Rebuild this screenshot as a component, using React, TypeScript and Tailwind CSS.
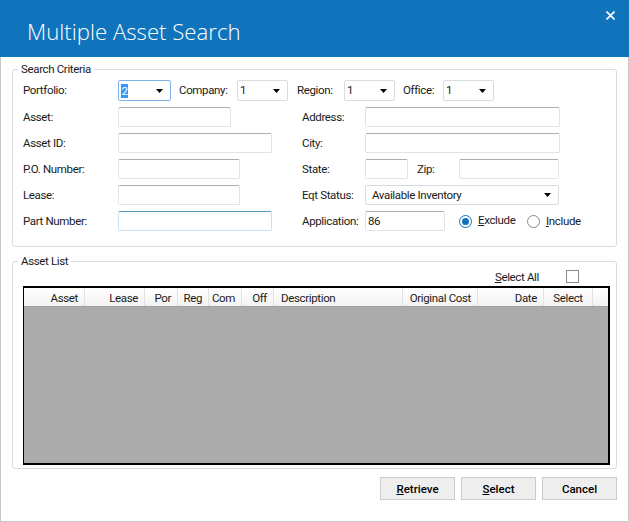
import { ReactNode } from "react";

const field = "h-5 rounded-[2px] border border-[#e2e3ea] border-t-[#abadb3] bg-white";
const button = "h-[23px] w-[75px] border border-[#cccccc] bg-[#eeeeee] pt-[2px] font-medium tracking-normal text-black";

function Label({ children, className = "" }: { children: ReactNode; className?: string }) {
  return <span className={`shrink-0 whitespace-nowrap ${className}`}>{children}</span>;
}

function Arrow() {
  return (
    <svg className="h-[4px] w-[7px] shrink-0 fill-black" viewBox="0 0 7 4">
      <path d="M0 0h7L3.5 4z" />
    </svg>
  );
}

function Combo({ value, className = "" }: { value: ReactNode; className?: string }) {
  return (
    <div className={`flex h-[21px] items-center justify-between rounded-[2px] border bg-white pl-[2px] pr-[7px] ${className}`}>
      <span>{value}</span>
      <Arrow />
    </div>
  );
}

function Radio({ checked }: { checked?: boolean }) {
  return (
    <span className={`flex h-[13px] w-[13px] shrink-0 items-center justify-center rounded-full border ${checked ? "border-[#0f74bc]" : "border-[#8a8a8a]"} bg-white`}>
      {checked && <span className="h-[7px] w-[7px] rounded-full bg-[#0f74bc]" />}
    </span>
  );
}

function Row({ label, left, rightLabel, children }: { label: string; left: ReactNode; rightLabel: string; children: ReactNode }) {
  return (
    <div className="flex h-5 items-center">
      <Label className="w-[95px] pt-[2px]">{label}</Label>
      <div className="w-[184px]">{left}</div>
      <Label className="w-[63px] pt-[2px]">{rightLabel}</Label>
      {children}
    </div>
  );
}

const columns = [
  { name: "Asset", width: "w-[61px]", align: "pr-[6px] text-right" },
  { name: "Lease", width: "w-[60px]", align: "pr-[6px] text-right" },
  { name: "Por", width: "w-[33px]", align: "pr-[6px] text-right" },
  { name: "Reg", width: "w-[31px]", align: "pr-[6px] text-right" },
  { name: "Com", width: "w-[33px]", align: "pr-[6px] text-right" },
  { name: "Off", width: "w-[32px]", align: "pr-[6px] text-right" },
  { name: "Description", width: "w-[129px]", align: "pl-[7px] text-left" },
  { name: "Original Cost", width: "w-[75px]", align: "pr-[6px] text-right" },
  { name: "Date", width: "w-[66px]", align: "pr-[6px] text-right" },
  { name: "Select", width: "w-[49px]", align: "text-center" },
];

export default function App() {
  return (
    <div className="flex h-[522px] w-[629px] flex-col border-x border-b border-[#c8c8c8] bg-white font-['Roboto',sans-serif] text-[11.5px] leading-none tracking-[-0.35px] text-[#1a1a1a]">
      <header className="-mx-px flex h-[57px] shrink-0 items-start justify-between bg-[#0f74bc] pl-[27px] pr-[14px]">
        <h1 className="mt-[17px] font-['Open_Sans',sans-serif] text-[22.2px] font-light leading-[30px] tracking-normal text-white">Multiple Asset Search</h1>
        <svg className="mt-[11px] h-[9px] w-[9px] stroke-white stroke-[1.6]" viewBox="0 0 9 9">
          <path d="M0.5 0.5l8 8M8.5 0.5l-8 8" />
        </svg>
      </header>

      <div className="flex flex-1 flex-col px-[11px] pt-[5px]">
        <fieldset className="h-[185px] rounded-[3px] border border-[#d5dfe5] pl-[10px]">
          <legend className="ml-[-5px] h-[14px] px-[3px] leading-[14px]">Search Criteria</legend>

          <div className="mt-[4px] flex h-[21px] items-center">
            <Label className="w-[95px]">Portfolio:</Label>
            <Combo
              value={<span className="block h-[14px] w-[7px] bg-[#3399ff] text-center leading-[14px] text-white">2</span>}
              className="w-[53px] border-[#7eb4ea]"
            />
            <Label className="ml-[8px] w-[58px]">Company:</Label>
            <Combo value="1" className="w-[51px] border-[#d9dce2]" />
            <Label className="ml-[9px] w-[47px]">Region:</Label>
            <Combo value="1" className="w-[51px] border-[#d9dce2]" />
            <Label className="ml-[8px] w-[40px]">Office:</Label>
            <Combo value="1" className="w-[51px] border-[#d9dce2]" />
          </div>

          <div className="mt-[6px] flex flex-col gap-[6px]">
            <Row label="Asset:" left={<div className={`${field} w-[113px]`} />} rightLabel="Address:">
              <div className={`${field} w-[195px]`} />
            </Row>
            <Row label="Asset ID:" left={<div className={`${field} w-[154px]`} />} rightLabel="City:">
              <div className={`${field} w-[195px]`} />
            </Row>
            <Row label="P.O. Number:" left={<div className={`${field} w-[122px]`} />} rightLabel="State:">
              <div className={`${field} w-[43px]`} />
              <Label className="ml-[9px] w-[42px] pt-[2px]">Zip:</Label>
              <div className={`${field} w-[100px]`} />
            </Row>
            <Row
              label="Lease:"
              left={<div className={`${field} w-[122px]`} />}
              rightLabel="Eqt Status:"
            >
              <div className="flex h-5 w-[194px] items-center justify-between rounded-[2px] border border-[#d9dce2] pl-[6px] pr-[7px]">
                <span className="pt-[2px]">Available Inventory</span>
                <Arrow />
              </div>
            </Row>
            <Row
              label="Part Number:"
              left={<div className="h-5 w-[154px] rounded-[2px] border border-[#c7e2f1] border-t-[#5794bf] bg-white" />}
              rightLabel="Application:"
            >
              <div className={`${field} flex w-[80px] items-center pl-[2px] pt-[2px]`}>86</div>
              <div className="ml-[14px] flex w-[68px] items-center gap-[6px]">
                <Radio checked />
                <span><span className="underline">E</span>xclude</span>
              </div>
              <div className="flex items-center gap-[6px]">
                <Radio />
                <span className="pt-[2px]"><span className="underline">I</span>nclude</span>
              </div>
            </Row>
          </div>
        </fieldset>

        <fieldset className="mt-[7px] flex h-[215px] flex-col rounded-[3px] border border-[#d5dfe5] pl-[10px] pr-[5px]">
          <legend className="ml-[-5px] h-[14px] px-[3px] leading-[14px]">Asset List</legend>

          <div className="flex h-[16px] items-center justify-end pr-[32px]">
            <span className="mr-[27px] pt-[4px]"><span className="underline">S</span>elect All</span>
            <span className="h-[13px] w-[13px] border border-[#8a8a8a] bg-white" />
          </div>

          <div className="mt-[2px] h-[179px] w-[587px] border-2 border-l-[1px] border-black bg-[#ababab]">
            <div className="flex h-[19px] border-b border-[#a0a0a0] bg-gradient-to-b from-white to-[#f2f2f2]">
              {columns.map((c) => (
                <span key={c.name} className={`${c.width} ${c.align} shrink-0 whitespace-nowrap border-r border-[#e3e3e3] leading-[21px]`}>
                  {c.name}
                </span>
              ))}
            </div>
          </div>
        </fieldset>

        <div className="mt-[8px] flex justify-end gap-[6px]">
          <button className={button}><span className="underline">R</span>etrieve</button>
          <button className={button}><span className="underline">S</span>elect</button>
          <button className={button}>Cancel</button>
        </div>
      </div>
    </div>
  );
}
